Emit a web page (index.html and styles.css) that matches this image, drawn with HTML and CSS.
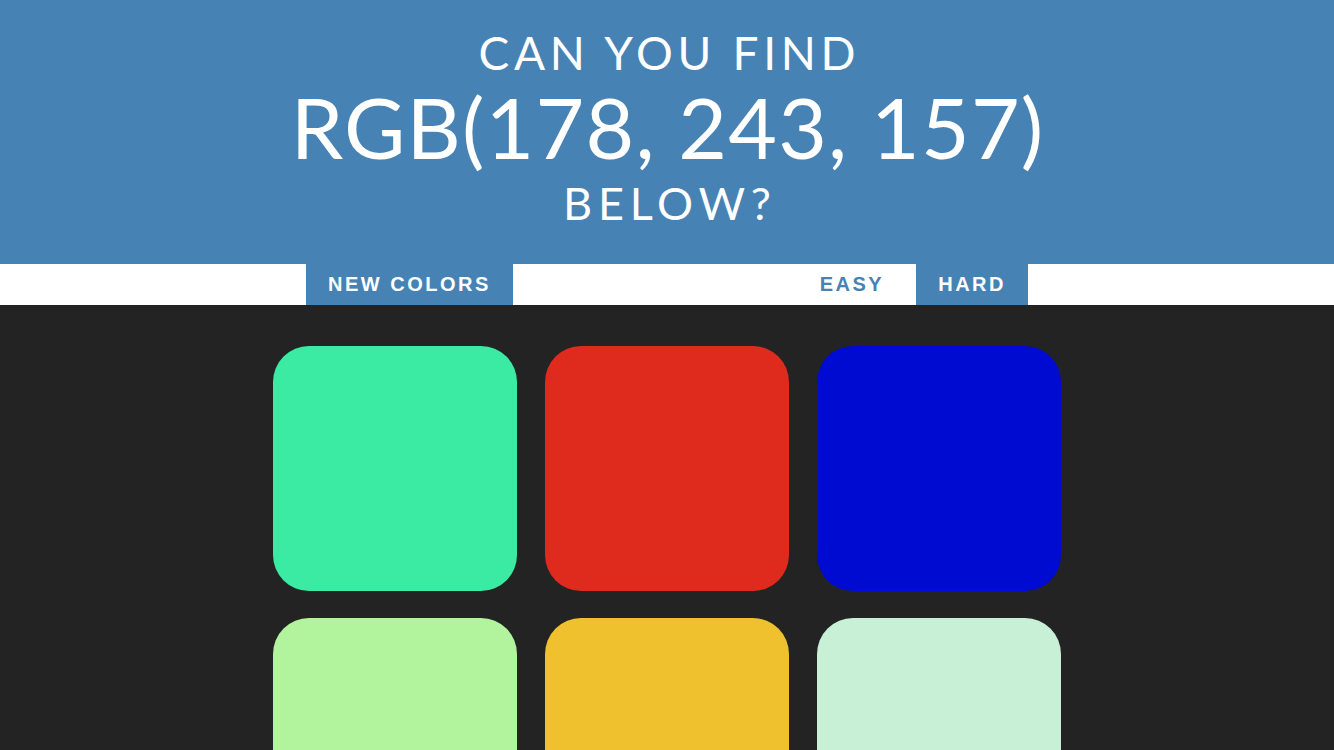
FILE: index.html
```html
<!DOCTYPE html>
<html lang="en">
<head>
<meta charset="utf-8">
<title>Color Game</title>
<link rel="stylesheet" href="styles.css">
</head>
<body>
  <header class="banner">
    <h1 class="title">
      <span class="line line-top">Can you find</span>
      <span class="line line-rgb">RGB(178, 243, 157)</span>
      <span class="line line-bottom">below?</span>
    </h1>
  </header>
  <nav class="stripe">
    <div class="stripe-inner">
      <button class="btn btn-active">New Colors</button>
      <span class="message"></span>
      <div class="modes">
        <button class="btn btn-mode">Easy</button>
        <button class="btn btn-active">Hard</button>
      </div>
    </div>
  </nav>
  <main class="board">
    <div class="grid">
      <div class="square sq-1"></div>
      <div class="square sq-2"></div>
      <div class="square sq-3"></div>
      <div class="square sq-4"></div>
      <div class="square sq-5"></div>
      <div class="square sq-6"></div>
    </div>
  </main>
</body>
</html>
```
FILE: styles.css
```css
html, body {
  margin: 0;
  padding: 0;
}
body {
  background: #232323;
  font-family: "Lato", "Liberation Sans", sans-serif;
}
.banner {
  background: #4682b4;
  color: #ffffff;
  height: 264px;
  box-sizing: border-box;
  padding-top: 28px;
}
.title {
  margin: 0;
  font-weight: 400;
  text-align: center;
  text-transform: uppercase;
}
.line {
  display: block;
}
.line-top {
  font-size: 46px;
  line-height: 50px;
  letter-spacing: 4.7px;
  text-indent: 4.7px;
}
.line-rgb {
  font-size: 84px;
  line-height: 98px;
  letter-spacing: 1.2px;
  text-indent: 1.2px;
}
.line-bottom {
  font-size: 45px;
  line-height: 55px;
  letter-spacing: 5.8px;
  text-indent: 5.8px;
}
.stripe {
  background: #ffffff;
  height: 41px;
  display: flex;
  justify-content: center;
}
.stripe-inner {
  width: 722px;
  display: flex;
  justify-content: space-between;
  align-items: stretch;
}
.modes {
  display: flex;
  gap: 10px;
}
.btn {
  border: none;
  margin: 0;
  padding: 0 22px 0 22px;
  font-family: "Liberation Sans", Arial, sans-serif;
  font-weight: 700;
  font-size: 20px;
  letter-spacing: 2.5px;
  text-transform: uppercase;
  background: #ffffff;
  color: #4682b4;
  height: 41px;
  cursor: pointer;
}
.btn-active {
  background: #4682b4;
  color: #ffffff;
}
.board {
  display: flex;
  justify-content: center;
  padding-top: 41px;
}
.grid {
  display: grid;
  grid-template-columns: repeat(3, 244.5px);
  grid-auto-rows: 244.5px;
  gap: 27px 27.5px;
}
.square {
  border-radius: 36px;
}
.sq-1 { background: #3beba3; }
.sq-2 { background: #de2b1e; }
.sq-3 { background: #000bd2; }
.sq-4 { background: #b2f39d; }
.sq-5 { background: #efc12f; }
.sq-6 { background: #c8f0d6; }
```
